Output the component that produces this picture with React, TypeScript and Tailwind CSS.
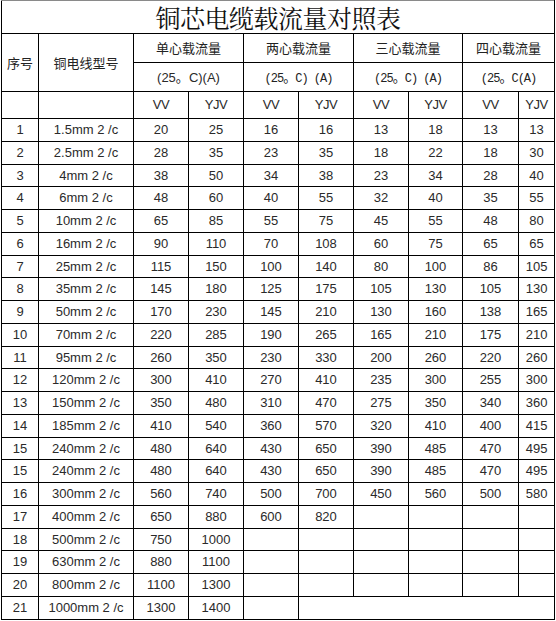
import React from 'react';

type Row = [string, string, ...string[]];

const rows: Row[] = [
  ['1', '1.5mm 2 /c', '20', '25', '16', '16', '13', '18', '13', '13'],
  ['2', '2.5mm 2 /c', '28', '35', '23', '35', '18', '22', '18', '30'],
  ['3', '4mm 2 /c', '38', '50', '34', '38', '23', '34', '28', '40'],
  ['4', '6mm 2 /c', '48', '60', '40', '55', '32', '40', '35', '55'],
  ['5', '10mm 2 /c', '65', '85', '55', '75', '45', '55', '48', '80'],
  ['6', '16mm 2 /c', '90', '110', '70', '108', '60', '75', '65', '65'],
  ['7', '25mm 2 /c', '115', '150', '100', '140', '80', '100', '86', '105'],
  ['8', '35mm 2 /c', '145', '180', '125', '175', '105', '130', '105', '130'],
  ['9', '50mm 2 /c', '170', '230', '145', '210', '130', '160', '138', '165'],
  ['10', '70mm 2 /c', '220', '285', '190', '265', '165', '210', '175', '210'],
  ['11', '95mm 2 /c', '260', '350', '230', '330', '200', '260', '220', '260'],
  ['12', '120mm 2 /c', '300', '410', '270', '410', '235', '300', '255', '300'],
  ['13', '150mm 2 /c', '350', '480', '310', '470', '275', '350', '340', '360'],
  ['14', '185mm 2 /c', '410', '540', '360', '570', '320', '410', '400', '415'],
  ['15', '240mm 2 /c', '480', '640', '430', '650', '390', '485', '470', '495'],
  ['15', '240mm 2 /c', '480', '640', '430', '650', '390', '485', '470', '495'],
  ['16', '300mm 2 /c', '560', '740', '500', '700', '450', '560', '500', '580'],
  ['17', '400mm 2 /c', '650', '880', '600', '820', '', '', '', ''],
  ['18', '500mm 2 /c', '750', '1000', '', '', '', '', '', ''],
  ['19', '630mm 2 /c', '880', '1100', '', '', '', '', '', ''],
  ['20', '800mm 2 /c', '1100', '1300', '', '', '', '', '', ''],
];

const widths = [37, 95, 55, 55, 55, 55, 55, 54, 56, 36];

const cell = 'border border-black text-center align-middle p-0 whitespace-nowrap';
const cn = '[font-family:"Noto_Sans_CJK_SC",sans-serif] text-[13px] text-[#222]';
const mono = '[font-family:"Liberation_Mono",monospace] text-[12px] tracking-[-1px] text-[#222]';

export default function App() {
  return (
    <div className="w-[556px] h-[621px] bg-white overflow-hidden pl-px">
      <table className="border-collapse table-fixed w-[553px] [font-family:'Liberation_Sans',Arial,sans-serif] text-[13px] text-[#2a2a2a]">
        <colgroup>
          {widths.map((w, i) => (
            <col key={i} style={{ width: w }} />
          ))}
        </colgroup>
        <tbody>
          <tr className="h-[33px]">
            <td
              colSpan={10}
              className="border border-black border-t-[#8a8a8a] text-center align-bottom p-0 pb-px [font-family:'Noto_Serif_CJK_SC','Noto_Sans_CJK_SC',serif] text-[25px] leading-[30px] text-[#111] tracking-[-0.5px]"
            >
              铜芯电缆载流量对照表
            </td>
          </tr>
          <tr className="h-[29px]">
            <td rowSpan={2} className={`${cell} ${cn}`}>序号</td>
            <td rowSpan={2} className={`${cell} ${cn}`}>铜电线型号</td>
            <td colSpan={2} className={`${cell} ${cn}`}>单心载流量</td>
            <td colSpan={2} className={`${cell} ${cn}`}>两心载流量</td>
            <td colSpan={2} className={`${cell} ${cn}`}>三心载流量</td>
            <td colSpan={2} className={`${cell} ${cn}`}>四心载流量</td>
          </tr>
          <tr className="h-[29px]">
            <td colSpan={2} className={`${cell} text-[13px]`}>
              (25<span className={cn}>。</span>C)(A)
            </td>
            <td colSpan={2} className={`${cell} ${mono}`}>
              (25<span className="[font-family:'Noto_Sans_CJK_SC',sans-serif] text-[13px]">。</span>C) (A)
            </td>
            <td colSpan={2} className={`${cell} ${mono}`}>
              (25<span className="[font-family:'Noto_Sans_CJK_SC',sans-serif] text-[13px]">。</span>C) (A)
            </td>
            <td colSpan={2} className={`${cell} ${mono}`}>
              (25<span className="[font-family:'Noto_Sans_CJK_SC',sans-serif] text-[13px]">。</span>C(A)
            </td>
          </tr>
          <tr className="h-[27px]">
            <td className={cell}></td>
            <td className={cell}></td>
            {['VV', 'YJV', 'VV', 'YJV', 'VV', 'YJV', 'VV', 'YJV'].map((t, i) => (
              <td key={i} className={`${cell} tracking-[-0.5px]`}>
                {t}
              </td>
            ))}
          </tr>
          {rows.map((r, i) => (
            <tr key={i} className="h-[22.75px]">
              {r.map((v, j) => (
                <td key={j} className={cell}>
                  {v}
                </td>
              ))}
            </tr>
          ))}
          <tr className="h-[22.75px]">
            <td className={cell}>21</td>
            <td className={cell}>1000mm 2 /c</td>
            <td className={cell}>1300</td>
            <td className={cell}>1400</td>
            <td className={cell}></td>
            <td colSpan={5} className={cell}></td>
          </tr>
        </tbody>
      </table>
    </div>
  );
}
